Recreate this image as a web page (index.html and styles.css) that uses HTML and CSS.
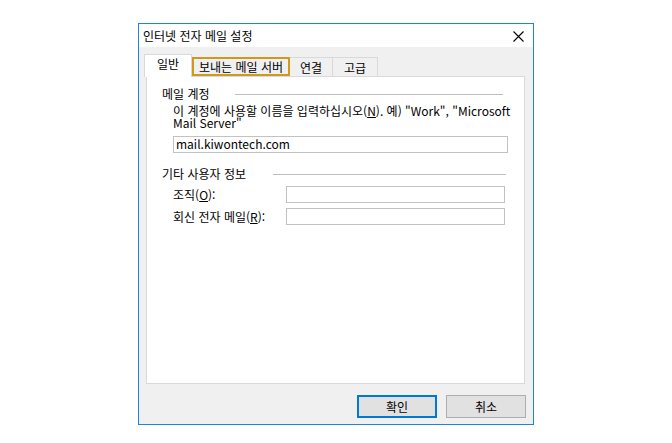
FILE: index.html
```html
<!DOCTYPE html>
<html lang="ko">
<head>
<meta charset="utf-8">
<title>인터넷 전자 메일 설정</title>
<link rel="stylesheet" href="styles.css">
</head>
<body>
<div class="dialog">
  <div class="titlebar">
    <span class="title">인터넷 전자 메일 설정</span>
    <span class="close"><svg width="11" height="11" viewBox="0 0 11 11"><path d="M0.5 0.5 L10.5 10.5 M10.5 0.5 L0.5 10.5" stroke="#000" stroke-width="1.1" fill="none"/></svg></span>
  </div>
  <div class="body">
    <div class="tabs">
      <div class="tab selected t1">일반</div>
      <div class="tab focus t2">보내는 메일 서버</div>
      <div class="tab t3">연결</div>
      <div class="tab t4">고급</div>
    </div>
    <div class="panel">
      <div class="group-head">
        <span class="group-label">메일 계정</span>
        <span class="rule r1"></span>
      </div>
      <div class="desc">이 계정에 사용할 이름을 입력하십시오(<u>N</u>). 예) "Work", "Microsoft<br>Mail Server"</div>
      <div class="input wide">mail.kiwontech.com</div>
      <div class="group-head g2">
        <span class="group-label">기타 사용자 정보</span>
        <span class="rule r2"></span>
      </div>
      <div class="row">
        <span class="row-label">조직(<u>O</u>):</span>
        <div class="input field"></div>
      </div>
      <div class="row">
        <span class="row-label">회신 전자 메일(<u>R</u>):</span>
        <div class="input field"></div>
      </div>
    </div>
    <div class="buttons">
      <div class="btn default">확인</div>
      <div class="btn">취소</div>
    </div>
  </div>
</div>
</body>
</html>
```

FILE: styles.css
```css
html, body {
  margin: 0;
  padding: 0;
  background: #ffffff;
}
body {
  padding-top: 23px;
  font-family: "Noto Sans CJK KR", "Noto Sans", sans-serif;
  font-size: 12px;
  color: #000;
}
.dialog {
  width: 394px;
  height: 400px;
  margin: 0 auto;
  border: 1px solid #1c84dc;
  display: flex;
  flex-direction: column;
}
.titlebar {
  height: 23px;
  background: #fff;
  display: flex;
  align-items: center;
  justify-content: space-between;
  padding-left: 4px;
  padding-right: 9px;
}
.title {
  line-height: 14px;
  padding-top: 1px;
}
.close {
  display: flex;
  padding-top: 2px;
}
.body {
  flex: 1;
  background: #f0f0f0;
  padding: 7px 8px 6px 7px;
  display: flex;
  flex-direction: column;
}
.tabs {
  display: flex;
  align-items: flex-end;
  height: 22px;
  margin-left: -2px;
}
.tab {
  box-sizing: border-box;
  height: 19px;
  border: 1px solid #d9d9d9;
  border-bottom: none;
  border-left: none;
  background: #f0f0f0;
  display: flex;
  align-items: center;
  justify-content: center;
  line-height: 14px;
  padding-top: 1px;
}
.tab.selected {
  background: #fff;
  border-left: 1px solid #d9d9d9;
  position: relative;
  z-index: 2;
  margin-bottom: -1px;
  height: 23px;
  align-items: flex-start;
  padding-top: 2px;
}
.tab.focus {
  border: 2px solid #cf9a1b;
}
.t1 { width: 48px; }
.t2 { width: 98px; }
.t3 { width: 43px; }
.t4 { width: 45px; }
.panel {
  height: 308px;
  box-sizing: border-box;
  background: #fff;
  border: 1px solid #d9d9d9;
  padding: 10px 19px 0 15px;
  display: flex;
  flex-direction: column;
}
.group-head {
  display: flex;
  align-items: center;
  height: 14px;
}
.group-label {
  line-height: 14px;
}
.rule {
  flex: 1;
  border-top: 1px solid #bdbdbd;
  margin-top: 1px;
}
.r1 { margin-left: 25px; margin-right: 2px; }
.r2 { margin-left: 27px; margin-right: -1px; }
.desc {
  margin-top: 4px;
  margin-left: 11px;
  line-height: 12px;
  white-space: nowrap;
}
.input {
  box-sizing: border-box;
  height: 17px;
  border: 1px solid #c2c2c2;
  background: #fff;
  line-height: 14px;
  padding-left: 2px;
}
.input.wide {
  margin-top: 7px;
  margin-left: 11px;
  width: 335px;
}
.g2 {
  margin-top: 14px;
}
.row {
  display: flex;
  align-items: center;
  margin-left: 11px;
  height: 17px;
  margin-top: 5px;
}
.row-label {
  width: 114px;
  line-height: 14px;
}
.field {
  width: 221px;
}
.buttons {
  display: flex;
  justify-content: flex-end;
  gap: 9px;
  margin-top: 11px;
  margin-right: -1px;
}
.btn {
  box-sizing: border-box;
  width: 80px;
  height: 23px;
  background: #e1e1e1;
  border: 1px solid #adadad;
  display: flex;
  align-items: center;
  justify-content: center;
  line-height: 14px;
}
.btn.default {
  border: 2px solid #0078d7;
}
```
